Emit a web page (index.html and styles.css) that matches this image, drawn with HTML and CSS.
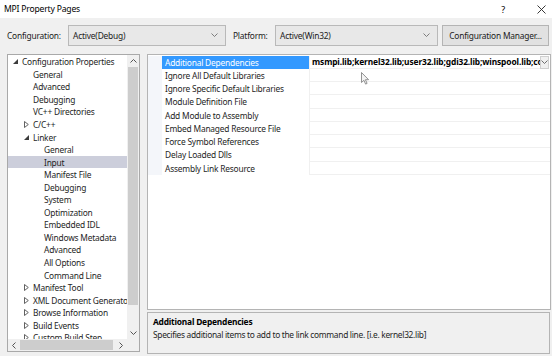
FILE: index.html
```html
<!DOCTYPE html>
<html>
<head>
<meta charset="utf-8">
<link rel="stylesheet" href="styles.css">
</head>
<body>
<div class="dialog">
  <div class="titlebar">
    <span class="title">MPI Property Pages</span>
    <span class="help">?</span>
    <svg class="close" width="9" height="9" viewBox="0 0 9 9"><path d="M0.5 0.5L8.5 8.5M8.5 0.5L0.5 8.5" stroke="#222" stroke-width="0.9" fill="none"/></svg>
  </div>
  <div class="toolbar">
    <span class="lbl lbl-config">Configuration:</span>
    <div class="combo combo-config"><span class="combo-text">Active(Debug)</span><svg class="chev" width="7" height="4" viewBox="0 0 7 4"><path d="M0.5 0.5L3.5 3.5L6.5 0.5" stroke="#707070" stroke-width="0.9" fill="none"/></svg></div>
    <span class="lbl lbl-platform">Platform:</span>
    <div class="combo combo-platform"><span class="combo-text">Active(Win32)</span><svg class="chev" width="7" height="4" viewBox="0 0 7 4"><path d="M0.5 0.5L3.5 3.5L6.5 0.5" stroke="#707070" stroke-width="0.9" fill="none"/></svg></div>
    <div class="btn">Configuration Manager...</div>
  </div>
  <div class="main">
    <div class="tree">
      <div class="tree-body">
        <div class="tree-list">
          <div class="node l0"><span class="tw"><svg width="5" height="5" viewBox="0 0 5 5"><path d="M5 0V5H0Z" fill="#3c3c3c"/></svg></span>Configuration Properties</div>
          <div class="node l1"><span class="tw"></span>General</div>
          <div class="node l1"><span class="tw"></span>Advanced</div>
          <div class="node l1"><span class="tw"></span>Debugging</div>
          <div class="node l1"><span class="tw"></span>VC++ Directories</div>
          <div class="node l1"><span class="tw"><svg width="5" height="7" viewBox="0 0 5 7"><path d="M0.5 0.5L4.3 3.5L0.5 6.5Z" fill="none" stroke="#505050" stroke-width="0.9"/></svg></span>C/C++</div>
          <div class="node l1"><span class="tw"><svg width="5" height="5" viewBox="0 0 5 5"><path d="M5 0V5H0Z" fill="#3c3c3c"/></svg></span>Linker</div>
          <div class="node l2"><span class="tw"></span>General</div>
          <div class="node l2 sel"><span class="tw"></span>Input</div>
          <div class="node l2"><span class="tw"></span>Manifest File</div>
          <div class="node l2"><span class="tw"></span>Debugging</div>
          <div class="node l2"><span class="tw"></span>System</div>
          <div class="node l2"><span class="tw"></span>Optimization</div>
          <div class="node l2"><span class="tw"></span>Embedded IDL</div>
          <div class="node l2"><span class="tw"></span>Windows Metadata</div>
          <div class="node l2"><span class="tw"></span>Advanced</div>
          <div class="node l2"><span class="tw"></span>All Options</div>
          <div class="node l2"><span class="tw"></span>Command Line</div>
          <div class="node l1"><span class="tw"><svg width="5" height="7" viewBox="0 0 5 7"><path d="M0.5 0.5L4.3 3.5L0.5 6.5Z" fill="none" stroke="#505050" stroke-width="0.9"/></svg></span>Manifest Tool</div>
          <div class="node l1"><span class="tw"><svg width="5" height="7" viewBox="0 0 5 7"><path d="M0.5 0.5L4.3 3.5L0.5 6.5Z" fill="none" stroke="#505050" stroke-width="0.9"/></svg></span>XML Document Generator Tool</div>
          <div class="node l1"><span class="tw"><svg width="5" height="7" viewBox="0 0 5 7"><path d="M0.5 0.5L4.3 3.5L0.5 6.5Z" fill="none" stroke="#505050" stroke-width="0.9"/></svg></span>Browse Information</div>
          <div class="node l1"><span class="tw"><svg width="5" height="7" viewBox="0 0 5 7"><path d="M0.5 0.5L4.3 3.5L0.5 6.5Z" fill="none" stroke="#505050" stroke-width="0.9"/></svg></span>Build Events</div>
          <div class="node l1"><span class="tw"><svg width="5" height="7" viewBox="0 0 5 7"><path d="M0.5 0.5L4.3 3.5L0.5 6.5Z" fill="none" stroke="#505050" stroke-width="0.9"/></svg></span>Custom Build Step</div>
        </div>
        <div class="vscroll">
          <div class="sb-arrow"><svg width="7" height="4" viewBox="0 0 7 4"><path d="M0.5 3.5L3.5 0.5L6.5 3.5" stroke="#555" stroke-width="1" fill="none"/></svg></div>
          <div class="vtrack"><div class="vthumb"></div></div>
          <div class="sb-arrow"><svg width="7" height="4" viewBox="0 0 7 4"><path d="M0.5 0.5L3.5 3.5L6.5 0.5" stroke="#555" stroke-width="1" fill="none"/></svg></div>
        </div>
      </div>
      <div class="hscroll">
        <div class="sb-arrow h"><svg width="4" height="7" viewBox="0 0 4 7"><path d="M3.5 0.5L0.5 3.5L3.5 6.5" stroke="#555" stroke-width="1" fill="none"/></svg></div>
        <div class="htrack"><div class="hthumb"></div></div>
        <div class="sb-arrow h"><svg width="4" height="7" viewBox="0 0 4 7"><path d="M0.5 0.5L3.5 3.5L0.5 6.5" stroke="#555" stroke-width="1" fill="none"/></svg></div>
        <div class="corner"></div>
      </div>
    </div>
    <div class="right">
      <div class="grid">
        <div class="prow"><div class="gut"></div><div class="pname sel">Additional Dependencies</div><div class="pval bold">msmpi.lib;kernel32.lib;user32.lib;gdi32.lib;winspool.lib;comdlg32.lib;advapi32.lib</div><div class="ddbtn"><svg width="7" height="4" viewBox="0 0 7 4"><path d="M0.5 0.5L3.5 3.5L6.5 0.5" stroke="#606060" stroke-width="0.9" fill="none"/></svg></div></div>
        <div class="prow"><div class="gut"></div><div class="pname">Ignore All Default Libraries</div><div class="pval"></div><div class="pend"></div></div>
        <div class="prow"><div class="gut"></div><div class="pname">Ignore Specific Default Libraries</div><div class="pval"></div><div class="pend"></div></div>
        <div class="prow"><div class="gut"></div><div class="pname">Module Definition File</div><div class="pval"></div><div class="pend"></div></div>
        <div class="prow"><div class="gut"></div><div class="pname">Add Module to Assembly</div><div class="pval"></div><div class="pend"></div></div>
        <div class="prow"><div class="gut"></div><div class="pname">Embed Managed Resource File</div><div class="pval"></div><div class="pend"></div></div>
        <div class="prow"><div class="gut"></div><div class="pname">Force Symbol References</div><div class="pval"></div><div class="pend"></div></div>
        <div class="prow"><div class="gut"></div><div class="pname">Delay Loaded Dlls</div><div class="pval"></div><div class="pend"></div></div>
        <div class="prow"><div class="gut"></div><div class="pname">Assembly Link Resource</div><div class="pval"></div><div class="pend"></div></div>
        <svg class="cursor" width="9" height="13" viewBox="0 0 9 13"><path d="M0.5 0.5V10.5L2.9 8.3L4.6 12.1L6.1 11.4L4.4 7.7H7.6Z" fill="#f4f4f4" stroke="#7a7a7a" stroke-width="0.8" stroke-linejoin="round"/></svg>
      </div>
      <div class="desc">
        <div class="desc-title">Additional Dependencies</div>
        <div class="desc-text">Specifies additional items to add to the link command line. [i.e. kernel32.lib]</div>
      </div>
    </div>
  </div>
</div>
</body>
</html>
```

FILE: styles.css
```css
html, body {
  margin: 0;
  padding: 0;
}
body {
  width: 552px;
  height: 356px;
  overflow: hidden;
  background: #f0f0f0;
  font-family: "Noto Sans", "Open Sans", sans-serif;
  font-size: 8.4px;
  letter-spacing: -0.2px;
  color: #1b1b1b;
}
.dialog {
  width: 552px;
  height: 356px;
  display: flex;
  flex-direction: column;
}
.titlebar {
  height: 18px;
  background: #ffffff;
  display: flex;
  align-items: center;
  padding-left: 4px;
  box-sizing: border-box;
  color: #000;
}
.title {
  flex: 1;
  font-size: 8.6px;
}
.help {
  font-size: 9px;
  margin-right: 32px;
}
.close {
  margin-right: 6px;
}
.toolbar {
  height: 36px;
  display: flex;
  align-items: center;
  padding-left: 7px;
  box-sizing: border-box;
  padding-bottom: 2px;
}
.lbl {
  white-space: nowrap;
}
.lbl-config {
  width: 61px;
}
.lbl-platform {
  width: 42px;
  margin-left: 7px;
}
.combo {
  height: 21px;
  box-sizing: border-box;
  border: 1px solid #b9b9b9;
  background: #e8e8e8;
  display: flex;
  align-items: center;
  justify-content: space-between;
  padding: 0 7px 0 4px;
}
.combo-config {
  width: 158px;
}
.combo-platform {
  width: 163px;
  padding-right: 7px;
}
.btn {
  margin-left: 4px;
  width: 107px;
  height: 21px;
  box-sizing: border-box;
  border: 1px solid #b4b4b4;
  background: #e1e1e1;
  display: flex;
  align-items: center;
  justify-content: center;
  white-space: nowrap;
}
.main {
  display: flex;
  padding-left: 7px;
  gap: 7px;
  height: 302px;
}
.tree {
  width: 133px;
  height: 298px;
  box-sizing: border-box;
  border: 1px solid #a9a9a9;
  background: #ffffff;
  display: flex;
  flex-direction: column;
}
.tree-body {
  flex: 1;
  display: flex;
  min-height: 0;
}
.tree-list {
  flex: 1;
  overflow: hidden;
  padding-top: 0.5px;
}
.node {
  height: 12.55px;
  display: flex;
  align-items: center;
  white-space: nowrap;
  color: #1e1e1e;
}
.node.sel {
  background: #cccedb;
}
.tw {
  width: 9px;
  flex: none;
  display: flex;
  align-items: center;
}
.l0 { padding-left: 5px; }
.l1 { padding-left: 16px; }
.l2 { padding-left: 27px; }
.vscroll {
  width: 12px;
  background: #f0f0f0;
  display: flex;
  flex-direction: column;
}
.sb-arrow {
  height: 12px;
  flex: none;
  display: flex;
  align-items: center;
  justify-content: center;
}
.vtrack {
  flex: 1;
  padding: 0 1px 22px;
  display: flex;
}
.vthumb {
  flex: 1;
  background: #cdcdcd;
}
.hscroll {
  height: 12px;
  display: flex;
  background: #f0f0f0;
}
.sb-arrow.h {
  width: 12px;
}
.htrack {
  flex: 1;
  padding: 1px 2px 1px 0;
  display: flex;
}
.hthumb {
  flex: 1;
  background: #cdcdcd;
}
.corner {
  width: 12px;
  background: #f0f0f0;
}
.right {
  width: 404px;
  display: flex;
  flex-direction: column;
  gap: 2px;
}
.grid {
  position: relative;
  height: 256px;
  box-sizing: border-box;
  border: 1px solid #b4b4b4;
  background: #ffffff;
  padding-top: 0.5px;
}
.prow {
  display: flex;
  height: 13.25px;
}
.gut {
  width: 14px;
  background: #f4f6fa;
}
.pname {
  width: 147px;
  padding-left: 3px;
  box-sizing: border-box;
  display: flex;
  align-items: center;
  white-space: nowrap;
  overflow: hidden;
  color: #1e1e1e;
}
.pname.sel {
  background: #3399ff;
  color: #ffffff;
}
.pval {
  width: 231px;
  box-sizing: border-box;
  border-left: 1px solid #f0f0f0;
  border-bottom: 1px solid #f0f0f0;
  padding-left: 2px;
  display: flex;
  align-items: center;
  white-space: nowrap;
  overflow: hidden;
  color: #000;
}
.pval.bold {
  font-weight: 700;
  letter-spacing: -0.12px;
}
.pend {
  flex: 1;
  border-bottom: 1px solid #f0f0f0;
}
.ddbtn {
  flex: 1;
  margin-right: 1px;
  box-sizing: border-box;
  border: 1px solid #cfcfcf;
  background: #f0f0f0;
  display: flex;
  align-items: center;
  justify-content: center;
}
.cursor {
  position: absolute;
  left: 213px;
  top: 17px;
}
.desc {
  height: 42px;
  box-sizing: border-box;
  border: 1px solid #b4b4b4;
  background: #f0f0f0;
  padding: 3px 0 0 5px;
  margin-right: 1px;
}
.desc-title {
  font-weight: 700;
  line-height: 12px;
  color: #000;
}
.desc-text {
  line-height: 13px;
  letter-spacing: -0.3px;
  color: #1e1e1e;
}
```
